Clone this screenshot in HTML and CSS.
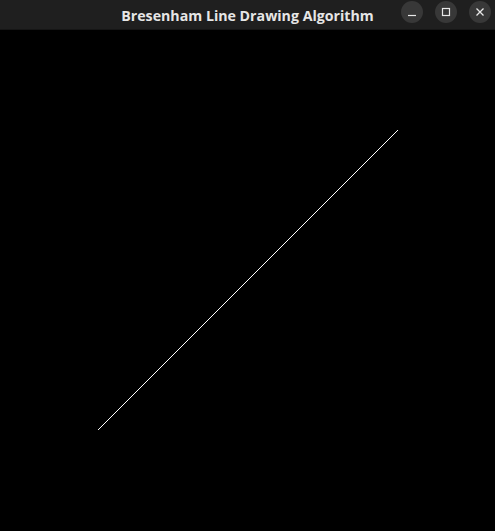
FILE: index.html
```html
<!DOCTYPE html>
<html>
<head>
<meta charset="utf-8">
<link rel="stylesheet" href="styles.css">
</head>
<body>
<div class="window">
  <header class="titlebar">
    <div class="side"></div>
    <div class="title">Bresenham Line Drawing Algorithm</div>
    <div class="side controls">
      <span class="btn"><svg width="10" height="10" viewBox="0 0 10 10"><path d="M1 8.5h8" stroke="#e8e8e8" stroke-width="1.2"/></svg></span>
      <span class="btn"><svg width="10" height="10" viewBox="0 0 10 10"><rect x="1.5" y="1.5" width="7" height="7" fill="none" stroke="#e8e8e8" stroke-width="1.2"/></svg></span>
      <span class="btn"><svg width="10" height="10" viewBox="0 0 10 10"><path d="M1.5 1.5l7 7M8.5 1.5l-7 7" stroke="#e8e8e8" stroke-width="1.3"/></svg></span>
    </div>
  </header>
  <main class="canvas">
    <svg width="495" height="501" viewBox="0 0 495 501">
      <line x1="397.5" y1="100.5" x2="97.5" y2="400.5" stroke="#ffffff" stroke-width="1" shape-rendering="crispEdges"/>
    </svg>
  </main>
</div>
</body>
</html>
```
FILE: styles.css
```css
html, body { margin: 0; padding: 0; background: #000; }
.window { width: 495px; height: 531px; display: flex; flex-direction: column; overflow: hidden; }
.titlebar {
  height: 30px;
  background: #1f1f1f;
  display: grid;
  grid-template-columns: 1fr auto 1fr;
  align-items: center;
  border-bottom: 1px solid #161616;
  box-sizing: border-box;
}
.title {
  font-family: "Open Sans", "DejaVu Sans", sans-serif;
  font-weight: 700;
  font-size: 14.2px;
  color: #e6e6e6;
  white-space: nowrap;
  padding-top: 1px;
}
.controls { display: flex; justify-content: flex-end; gap: 12px; padding-right: 4px; align-self: start; padding-top: 1px; }
.btn {
  width: 22px; height: 22px; border-radius: 50%;
  background: #383838;
  display: flex; align-items: center; justify-content: center;
}
.canvas { flex: 1; background: #000; }
.canvas svg { display: block; }
```
